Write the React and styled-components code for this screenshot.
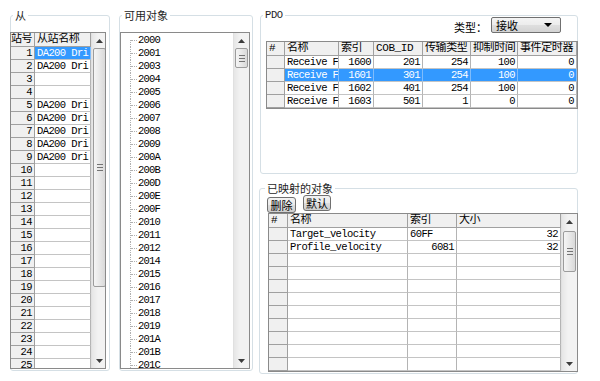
import React from "react"
import styled, { createGlobalStyle } from "styled-components"

const MONO = `"Liberation Mono", "Noto Sans CJK SC", monospace`
const UI = `"Noto Sans CJK SC", "Noto Sans", sans-serif`

const GlobalStyle = createGlobalStyle`
  html, body {
    margin: 0;
    padding: 0;
    background: #fff;
  }
  body {
    width: 600px;
    height: 381px;
    overflow: hidden;
    font-family: ${UI};
    color: #000;
  }
`

const Window = styled.div`
  display: flex;
  box-sizing: border-box;
  width: 600px;
  height: 381px;
  padding: 8px 22px 10px 10px;
  gap: 9px;
`

const Column = styled.div`
  display: flex;
  flex-direction: column;
  width: 319px;
  margin-left: -3px;
  gap: 7px;
`

const Group = styled.fieldset`
  box-sizing: border-box;
  margin: 0;
  padding: 0;
  min-width: 0;
  width: ${p => p.$width || "auto"};
  height: ${p => p.$height || "auto"};
  flex: ${p => (p.$grow ? "1" : "none")};
  display: flex;
  flex-direction: column;
  border: 1px solid #d5dfe5;
  border-radius: 3px;
`

const Legend = styled.legend`
  margin-left: ${p => p.$indent || 2}px;
  padding: 0 2px;
  font-family: ${p => (p.$mono ? MONO : UI)};
  font-size: ${p => (p.$mono ? "10.5px" : "11px")};
  letter-spacing: ${p => (p.$mono ? "-0.4px" : "0")};
  line-height: 14px;
  color: #1e1e1e;
`

const Body = styled.div`
  flex: 1;
  min-height: 0;
  display: flex;
  flex-direction: column;
  padding: ${p => p.$pad};
`

/* ---------- grid ---------- */

const GridBox = styled.div`
  display: flex;
  flex: 1;
  min-height: 0;
  margin: ${p => p.$margin || "0"};
  border: 1px solid #8a8a8a;
  background: ${p => p.$empty || "#fff"};
  overflow: hidden;
`

const Table = styled.div`
  display: flex;
  flex-direction: column;
  flex: none;
`

const Row = styled.div`
  display: grid;
  grid-template-columns: ${p => p.$cols};
`

const Cell = styled.div`
  box-sizing: border-box;
  height: 13px;
  padding: ${p => (p.$right ? "0 2px 0 0" : "0 0 0 2px")};
  border-right: 1px solid ${p => (p.$sel ? "#7fbcfb" : p.$fixed ? "#a0a0a0" : "#b4b4b4")};
  border-bottom: 1px solid ${p => (p.$fixed ? "#a0a0a0" : "#c4c4c4")};
  background: ${p => (p.$sel ? "#3399ff" : p.$fixed ? "#f0f0f0" : "#fff")};
  color: ${p => (p.$sel ? "#fff" : "#000")};
  text-align: ${p => (p.$right ? "right" : "left")};
  white-space: nowrap;
  overflow: hidden;
  font-family: ${MONO};
  font-size: 10.5px;
  letter-spacing: -0.6px;
  line-height: 12px;
`

const HeadCell = styled(Cell)`
  height: 14px;
  padding: 0 0 0 ${p => (p.$tight ? 0 : 2)}px;
  background: #f0f0f0;
  border-right-color: #a0a0a0;
  border-bottom-color: #a0a0a0;
  font-size: 11px;
  letter-spacing: -0.4px;
  line-height: 13px;
`

/* ---------- scrollbar ---------- */

const Track = styled.div`
  flex: none;
  width: 15px;
  display: flex;
  flex-direction: column;
  background: linear-gradient(90deg, #e6e6e6, #f2f2f2 40%, #f2f2f2);
  border-left: 1px solid #e0e0e0;
`

const ArrowBtn = styled.div`
  flex: none;
  height: 15px;
  display: flex;
  align-items: center;
  justify-content: center;
`

const Thumb = styled.div`
  flex: none;
  margin: ${p => p.$top}px 1px 0 1px;
  height: ${p => p.$size}px;
  box-sizing: border-box;
  border: 1px solid #9c9c9c;
  border-radius: 2px;
  background: linear-gradient(90deg, #f5f5f5, #e8e8e8 50%, #d9d9d9);
  display: flex;
  align-items: center;
  justify-content: center;
`

const Grip = styled.div`
  width: 6px;
  height: 5px;
  border-top: 1px solid #747474;
  border-bottom: 1px solid #747474;
  background: linear-gradient(#747474, #747474) center / 100% 1px no-repeat;
`

const Spacer = styled.div`
  flex: 1;
`

const Arrow = ({ down }) => (
  <ArrowBtn>
    <svg width="7" height="4" viewBox="0 0 7 4">
      <path d={down ? "M0 0H7L3.5 4Z" : "M0 4H7L3.5 0Z"} fill="#3c3c3c" />
    </svg>
  </ArrowBtn>
)

const ScrollBar = ({ top, size }) => (
  <Track>
    <Arrow />
    <Thumb $top={top} $size={size}>
      <Grip />
    </Thumb>
    <Spacer />
    <Arrow down />
  </Track>
)

/* ---------- tree ---------- */

const TreeArea = styled.div`
  flex: 1;
  padding-top: 1px;
  overflow: hidden;
`

const TreeItem = styled.div`
  position: relative;
  height: 13px;
  line-height: 13px;
  padding-left: 17px;
  font-family: ${MONO};
  font-size: 10.5px;
  letter-spacing: -0.8px;
  white-space: nowrap;
  &::before {
    content: "";
    position: absolute;
    left: 9px;
    top: ${p => (p.$first ? "6px" : "0")};
    bottom: 0;
    border-left: 1px dotted #b0b0b0;
  }
  &::after {
    content: "";
    position: absolute;
    left: 10px;
    top: 6px;
    width: 6px;
    border-top: 1px dotted #b0b0b0;
  }
`

/* ---------- controls ---------- */

const Toolbar = styled.div`
  display: flex;
  justify-content: flex-end;
  align-items: flex-end;
  margin-top: -5px;
  padding-right: 16px;
`

const Label = styled.span`
  font-family: ${UI};
  font-size: 11px;
  line-height: 12px;
  margin-right: 4px;
`

const Combo = styled.div`
  box-sizing: border-box;
  width: 70px;
  height: 16px;
  display: flex;
  align-items: center;
  justify-content: space-between;
  padding: 0 8px 0 4px;
  border: 1px solid #707070;
  border-radius: 2px;
  background: linear-gradient(#f4f4f4, #ececec 50%, #dfdfdf 50%, #d3d3d3);
  font-family: ${UI};
  font-size: 11px;
  line-height: 14px;
`

const ButtonRow = styled.div`
  display: flex;
  align-items: flex-start;
  gap: 7px;
`

const Button = styled.div`
  box-sizing: border-box;
  width: ${p => p.$w}px;
  height: 16px;
  margin-top: ${p => p.$dy}px;
  display: flex;
  align-items: center;
  justify-content: center;
  border: 1px solid #707070;
  border-radius: 3px;
  background: linear-gradient(#f3f3f3, #ebebeb 50%, #dddddd 50%, #cfcfcf);
  font-family: ${UI};
  font-size: 11px;
  line-height: 14px;
`

/* ---------- data ---------- */

const filled = [1, 2, 5, 6, 7, 8, 9]
const slaves = Array.from({ length: 25 }, (_, i) => ({
  id: i + 1,
  name: filled.includes(i + 1) ? "DA200 Dri" : "",
}))

const objects = ["2000", "2001", "2003", "2004", "2005", "2006", "2007", "2008", "2009", "200A", "200B", "200D", "200E", "200F", "2010", "2011", "2012", "2014", "2015", "2016", "2017", "2018", "2019", "201A", "201B", "201C"]

const pdos = [
  ["Receive F", 1600, 201, 254, 100, 0],
  ["Receive F", 1601, 301, 254, 100, 0],
  ["Receive F", 1602, 401, 254, 100, 0],
  ["Receive F", 1603, 501, 1, 0, 0],
]

const mapped = [
  { name: "Target_velocity", index: "60FF", size: 32 },
  { name: "Profile_velocity", index: "6081", size: 32, right: true },
  ...Array.from({ length: 9 }, () => ({ name: "", index: "", size: "" })),
]

const SLAVE_COLS = "24px 56px"
const PDO_COLS = "18px 54px 35px 49px 48px 47px 59px"
const MAP_COLS = "19px 120px 49px 104px"

export default function App() {
  return (
    <>
      <GlobalStyle />
      <Window>
        <Group $width="100px">
          <Legend>从</Legend>
          <Body $pad="10px 3px 1px 0">
            <GridBox $margin="0 0 0 -1px">
              <Table>
                <Row $cols={SLAVE_COLS}>
                  <HeadCell $tight>站号</HeadCell>
                  <HeadCell>从站名称</HeadCell>
                </Row>
                {slaves.map(s => (
                  <Row key={s.id} $cols={SLAVE_COLS}>
                    <Cell $fixed $right>{s.id}</Cell>
                    <Cell $sel={s.id === 1}>{s.name}</Cell>
                  </Row>
                ))}
              </Table>
              <ScrollBar top={0} size={239} />
            </GridBox>
          </Body>
        </Group>

        <Group $width="134px">
          <Legend>可用对象</Legend>
          <Body $pad="10px 2px 1px 0">
            <GridBox>
              <TreeArea>
                {objects.map((o, i) => (
                  <TreeItem key={o} $first={i === 0}>{o}</TreeItem>
                ))}
              </TreeArea>
              <ScrollBar top={0} size={20} />
            </GridBox>
          </Body>
        </Group>

        <Column>
          <Group $height="166px" style={{ marginLeft: 1 }}>
            <Legend $mono>PDO</Legend>
            <Body $pad="0 0 7px 5px">
              <Toolbar>
                <Label>类型：</Label>
                <Combo>
                  <span>接收</span>
                  <svg width="8" height="4" viewBox="0 0 8 4">
                    <path d="M0 0H8L4 4Z" fill="#000" />
                  </svg>
                </Combo>
              </Toolbar>
              <GridBox $margin="8px -1px 0 0" $empty="#f0f0f0">
                <Table>
                  <Row $cols={PDO_COLS}>
                    {["#", "名称", "索引", "COB_ID", "传输类型", "抑制时间", "事件定时器"].map(h => (
                      <HeadCell key={h}>{h}</HeadCell>
                    ))}
                  </Row>
                  {pdos.map((r, i) => (
                    <Row key={r[1]} $cols={PDO_COLS}>
                      <Cell $fixed />
                      {r.map((v, j) => (
                        <Cell key={j} $right={j > 0} $sel={i === 1}>{v}</Cell>
                      ))}
                    </Row>
                  ))}
                </Table>
              </GridBox>
            </Body>
          </Group>

          <Group $grow>
            <Legend $indent={5}>已映射的对象</Legend>
            <Body $pad="0 0 1px 7px">
              <ButtonRow>
                <Button $w={29} $dy={2}>删除</Button>
                <Button $w={28} $dy={0}>默认</Button>
              </ButtonRow>
              <GridBox $margin="0 -1px 0 1px">
                <Table>
                  <Row $cols={MAP_COLS}>
                    {["#", "名称", "索引", "大小"].map(h => (
                      <HeadCell key={h}>{h}</HeadCell>
                    ))}
                  </Row>
                  {mapped.map((m, i) => (
                    <Row key={i} $cols={MAP_COLS}>
                      <Cell $fixed />
                      <Cell>{m.name}</Cell>
                      <Cell $right={m.right}>{m.index}</Cell>
                      <Cell $right>{m.size}</Cell>
                    </Row>
                  ))}
                </Table>
                <ScrollBar top={2} size={41} />
              </GridBox>
            </Body>
          </Group>
        </Column>
      </Window>
    </>
  )
}
